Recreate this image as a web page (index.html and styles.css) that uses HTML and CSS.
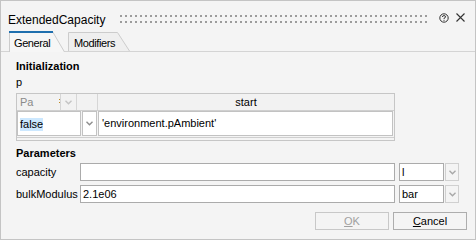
FILE: index.html
```html
<!DOCTYPE html>
<html lang="en">

<head>
    <meta charset="UTF-8">
    <title>ExtendedCapacity</title>
    <link rel="stylesheet" href="styles.css">
</head>

<body>
    <div class="dialog">
        <div class="titlebar">
            <span class="title">ExtendedCapacity</span>
            <div class="grip"></div>
            <svg class="help" width="10" height="10" viewBox="0 0 10 10">
                <circle cx="5" cy="5" r="4.2" fill="none" stroke="#333" stroke-width="1"/>
                <path d="M3.4 4 Q3.4 2.6 5 2.6 Q6.6 2.6 6.6 3.9 Q6.6 4.7 5 5.3 V6" fill="none" stroke="#333" stroke-width="1"/>
                <rect x="4.5" y="6.8" width="1" height="1" fill="#333"/>
            </svg>
            <svg class="close" width="9" height="9" viewBox="0 0 9 9">
                <path d="M0.5 0.5 L8.5 8.5 M8.5 0.5 L0.5 8.5" stroke="#333" stroke-width="1.1"/>
            </svg>
        </div>

        <div class="tabs">
            <div class="tab active">
                <svg class="tab-shape" width="56" height="21" viewBox="0 0 56 21">
                    <path d="M0.5 21 V0.5 H43.5 L55.5 21" fill="#f6f6f6" stroke="#cccccc"/>
                    <rect x="0" y="0" width="44" height="2" fill="#1f6fae"/>
                </svg>
                <span class="tab-label">General</span>
            </div>
            <div class="tab">
                <svg class="tab-shape" width="62" height="19" viewBox="0 0 62 19">
                    <path d="M0.5 19 V0.5 H49.5 L61.5 19" fill="#efefef" stroke="#cccccc"/>
                </svg>
                <span class="tab-label">Modifiers</span>
            </div>
        </div>

        <div class="panel">
            <div class="section first">Initialization</div>
            <div class="var">p</div>

            <div class="grid">
                <div class="grid-head">
                    <div class="hc hc-name">Pa<span class="resize"></span></div>
                    <div class="hc hc-drop">
                        <svg width="7" height="5" viewBox="0 0 7 5"><path d="M0.5 0.8 L3.5 3.8 L6.5 0.8" fill="none" stroke="#c4c4c4" stroke-width="1.4"/></svg>
                    </div>
                    <div class="hc hc-blank"></div>
                    <div class="hc hc-start">start</div>
                </div>
                <div class="grid-row">
                    <div class="dc dc-name"><span class="sel">false</span></div>
                    <div class="dc dc-drop">
                        <svg width="7" height="5" viewBox="0 0 7 5"><path d="M0.5 0.8 L3.5 3.8 L6.5 0.8" fill="none" stroke="#8e8e8e" stroke-width="1.4"/></svg>
                    </div>
                    <div class="dc dc-value">'environment.pAmbient'</div>
                </div>
                <div class="grid-scroll"></div>
            </div>

            <div class="section">Parameters</div>
            <div class="param first">
                <span class="label">capacity</span>
                <div class="field"></div>
                <div class="unit">l</div>
                <div class="unit-drop">
                    <svg width="7" height="5" viewBox="0 0 7 5"><path d="M0.5 0.8 L3.5 3.8 L6.5 0.8" fill="none" stroke="#a8a8a8" stroke-width="1.4"/></svg>
                </div>
            </div>
            <div class="param">
                <span class="label">bulkModulus</span>
                <div class="field">2.1e06</div>
                <div class="unit">bar</div>
                <div class="unit-drop">
                    <svg width="7" height="5" viewBox="0 0 7 5"><path d="M0.5 0.8 L3.5 3.8 L6.5 0.8" fill="none" stroke="#a8a8a8" stroke-width="1.4"/></svg>
                </div>
            </div>
        </div>

        <div class="buttons">
            <button class="btn disabled"><u>O</u>K</button>
            <button class="btn"><u>C</u>ancel</button>
        </div>
    </div>
</body>

</html>
```

FILE: styles.css
```css
* {
    margin: 0;
    padding: 0;
    box-sizing: border-box;
}

body {
    font-family: "Liberation Sans", Arial, sans-serif;
    font-size: 11px;
    color: #000;
    background: #ffffff;
}

.dialog {
    width: 476px;
    height: 240px;
    border: 1px solid #c4c4c4;
    background: #f4f4f4;
    display: flex;
    flex-direction: column;
}

/* title bar */
.titlebar {
    height: 30px;
    display: flex;
    align-items: flex-start;
    padding: 12px 0 0 7px;
}

.title {
    width: 112px;
    font-size: 12px;
    line-height: 14px;
}

.grip {
    flex: 1;
    height: 8px;
    margin: 2px 12px 0 0;
    background:
        linear-gradient(90deg, #9c9c9c 2px, transparent 2px) 0 0 / 5px 2px repeat-x,
        linear-gradient(90deg, #9c9c9c 2px, transparent 2px) 0 6px / 5px 2px repeat-x;
}

.help {
    margin-top: 0;
}

.close {
    margin: 0 10px 0 7px;
}

/* tabs */
.tabs {
    height: 21px;
    display: flex;
    align-items: flex-end;
    padding-left: 8px;
    border-bottom: 1px solid #d4d4d4;
}

.tab {
    position: relative;
    width: 62px;
    height: 19px;
    margin-left: 3px;
    padding: 4px 0 0 6px;
    line-height: 14px;
    letter-spacing: -0.4px;
}

.tab.active {
    width: 56px;
    height: 21px;
    margin: 0 0 -1px 0;
    padding: 5px 0 0 5px;
}

.tab-shape {
    position: absolute;
    left: 0;
    top: 0;
}

.tab-label {
    position: relative;
}

/* panel */
.panel {
    flex: 1;
    display: flex;
    flex-direction: column;
    padding-left: 15px;
}

.section {
    font-weight: bold;
    line-height: 14px;
    margin-top: 5px;
}

.section.first {
    margin-top: 7px;
}

.var {
    line-height: 14px;
    margin-top: 2px;
}

/* parameter grid */
.grid {
    width: 379px;
    height: 48px;
    margin-top: 4px;
    border: 1px solid #c6c6c6;
    background: #f4f4f4;
}

.grid-head {
    display: flex;
    height: 17px;
    border-bottom: 1px solid #cfcfcf;
    background: #f2f2f2;
}

.hc {
    height: 16px;
    line-height: 16px;
    border-right: 1px solid #d6d6d6;
}

.hc-name {
    position: relative;
    width: 44px;
    padding-left: 3px;
    color: #8a8a8a;
}

.resize {
    position: absolute;
    right: 0;
    top: 5px;
    width: 1px;
    height: 6px;
    background:
        linear-gradient(#c08a20 1px, transparent 1px) 0 0 / 1px 3px repeat-y;
}

.hc-drop,
.dc-drop {
    display: flex;
    align-items: center;
    justify-content: center;
}

.hc-drop {
    width: 16px;
}

.hc-blank {
    width: 21px;
}

.hc-start {
    flex: 1;
    text-align: center;
    border-right: none;
}

.grid-row {
    display: flex;
    height: 25px;
}

.dc {
    height: 25px;
    margin-right: 1px;
    border: 1px solid #c2c2c2;
    background: #ffffff;
    line-height: 23px;
}

.dc-name {
    width: 64px;
    padding-left: 2px;
}

.sel {
    display: inline-block;
    line-height: 13px;
    vertical-align: middle;
    background: #cce8ff;
}

.dc-drop {
    width: 15px;
}

.dc-value {
    width: 295px;
    padding-left: 3px;
}

.grid-scroll {
    height: 3px;
    margin-top: 1px;
    border-top: 1px solid #cfcfcf;
}

/* parameter rows */
.param {
    display: flex;
    height: 18px;
    margin-top: 4px;
}

.param.first {
    margin-top: 3px;
}

.label {
    width: 64px;
    line-height: 18px;
}

.field,
.unit {
    height: 18px;
    border: 1px solid #ababab;
    background: #ffffff;
    line-height: 16px;
    padding-left: 2px;
}

.field {
    width: 315px;
}

.unit {
    width: 45px;
    margin-left: 4px;
}

.unit-drop {
    width: 14px;
    height: 18px;
    margin-left: 1px;
    border: 1px solid #d0d0d0;
    background: #f4f4f4;
    display: flex;
    align-items: center;
    justify-content: center;
}

/* buttons */
.buttons {
    display: flex;
    justify-content: flex-end;
    gap: 4px;
    padding: 0 8px 0 0;
    margin-bottom: 9px;
}

.btn {
    width: 74px;
    height: 18px;
    border: 1px solid #adadad;
    background: #f4f4f4;
    font-family: "Liberation Sans", Arial, sans-serif;
    font-size: 11px;
    color: #000;
}

.btn.disabled {
    color: #a0a0a0;
    border-color: #c8c8c8;
}
```
